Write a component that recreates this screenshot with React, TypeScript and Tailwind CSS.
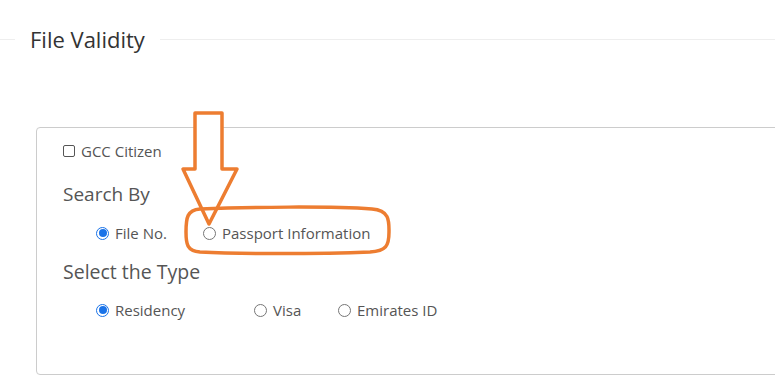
import React from 'react';

const font = { fontFamily: '"Open Sans", "Liberation Sans", sans-serif' };

const Radio = ({ checked }: { checked?: boolean }) =>
  checked ? (
    <span className="inline-flex h-[13px] w-[13px] shrink-0 items-center justify-center rounded-full border border-[#1a73e8] bg-white">
      <span className="h-[8px] w-[8px] rounded-full bg-[#1a73e8]" />
    </span>
  ) : (
    <span className="inline-block h-[13px] w-[13px] shrink-0 rounded-full border border-[#767676] bg-white" />
  );

const Option = ({ label, checked, width }: { label: string; checked?: boolean; width: string }) => (
  <label className={`flex items-center gap-[6px] ${width}`}>
    <Radio checked={checked} />
    <span className="text-[15px] leading-[20px] text-[#555]">{label}</span>
  </label>
);

const App: React.FC = () => {
  return (
    <div className="relative h-[378px] w-[775px] overflow-hidden bg-white" style={font}>
      {/* Legend line */}
      <div className="pt-[26px]">
        <div className="flex items-center">
          <div className="h-px w-[15px] bg-[#eee]" />
          <span className="px-[15px] text-[22px] leading-[26px] text-[#333]">File Validity</span>
          <div className="h-px flex-1 bg-[#eee]" />
        </div>
      </div>

      {/* Form box */}
      <div className="ml-[36px] mt-[75px] h-[248px] w-[760px] rounded-[4px] border border-[#ccc] pl-[26px] pt-[13px]">
        <label className="flex items-center gap-[6px]">
          <span className="h-[12px] w-[12px] rounded-[2px] border border-[#555] bg-white" />
          <span className="text-[15px] leading-[20px] text-[#555]">GCC Citizen</span>
        </label>

        <div className="mt-[21px] text-[19px] leading-[24px] text-[#555]">Search By</div>
        <div className="mt-[17px] flex items-center pl-[33px]">
          <Option label="File No." checked width="w-[107px]" />
          <Option label="Passport Information" width="w-[200px]" />
        </div>

        <div className="mt-[17px] text-[19.5px] leading-[24px] text-[#555]">Select the Type</div>
        <div className="mt-[16px] flex items-center pl-[33px]">
          <Option label="Residency" checked width="w-[158px]" />
          <Option label="Visa" width="w-[84px]" />
          <Option label="Emirates ID" width="w-[120px]" />
        </div>
      </div>

      {/* Annotation: arrow + highlight */}
      <svg className="pointer-events-none absolute left-0 top-0" width="775" height="378" viewBox="0 0 775 378">
        <path
          d="M195 113 L222 113 L222 169 L237 169 L209 224 L183 169 L195 169 Z"
          fill="white"
          stroke="#ED7D31"
          strokeWidth="3.5"
          strokeLinejoin="round"
        />
        <path
          d="M200 209 C250 207 330 206 372 209 C390 210 389 222 389 232 C389 246 386 251 370 252 C320 254 240 254 200 252 C187 251 186 244 186 232 C186 218 187 210 200 209 Z"
          fill="none"
          stroke="#ED7D31"
          strokeWidth="3.5"
        />
      </svg>
    </div>
  );
};

export default App;
